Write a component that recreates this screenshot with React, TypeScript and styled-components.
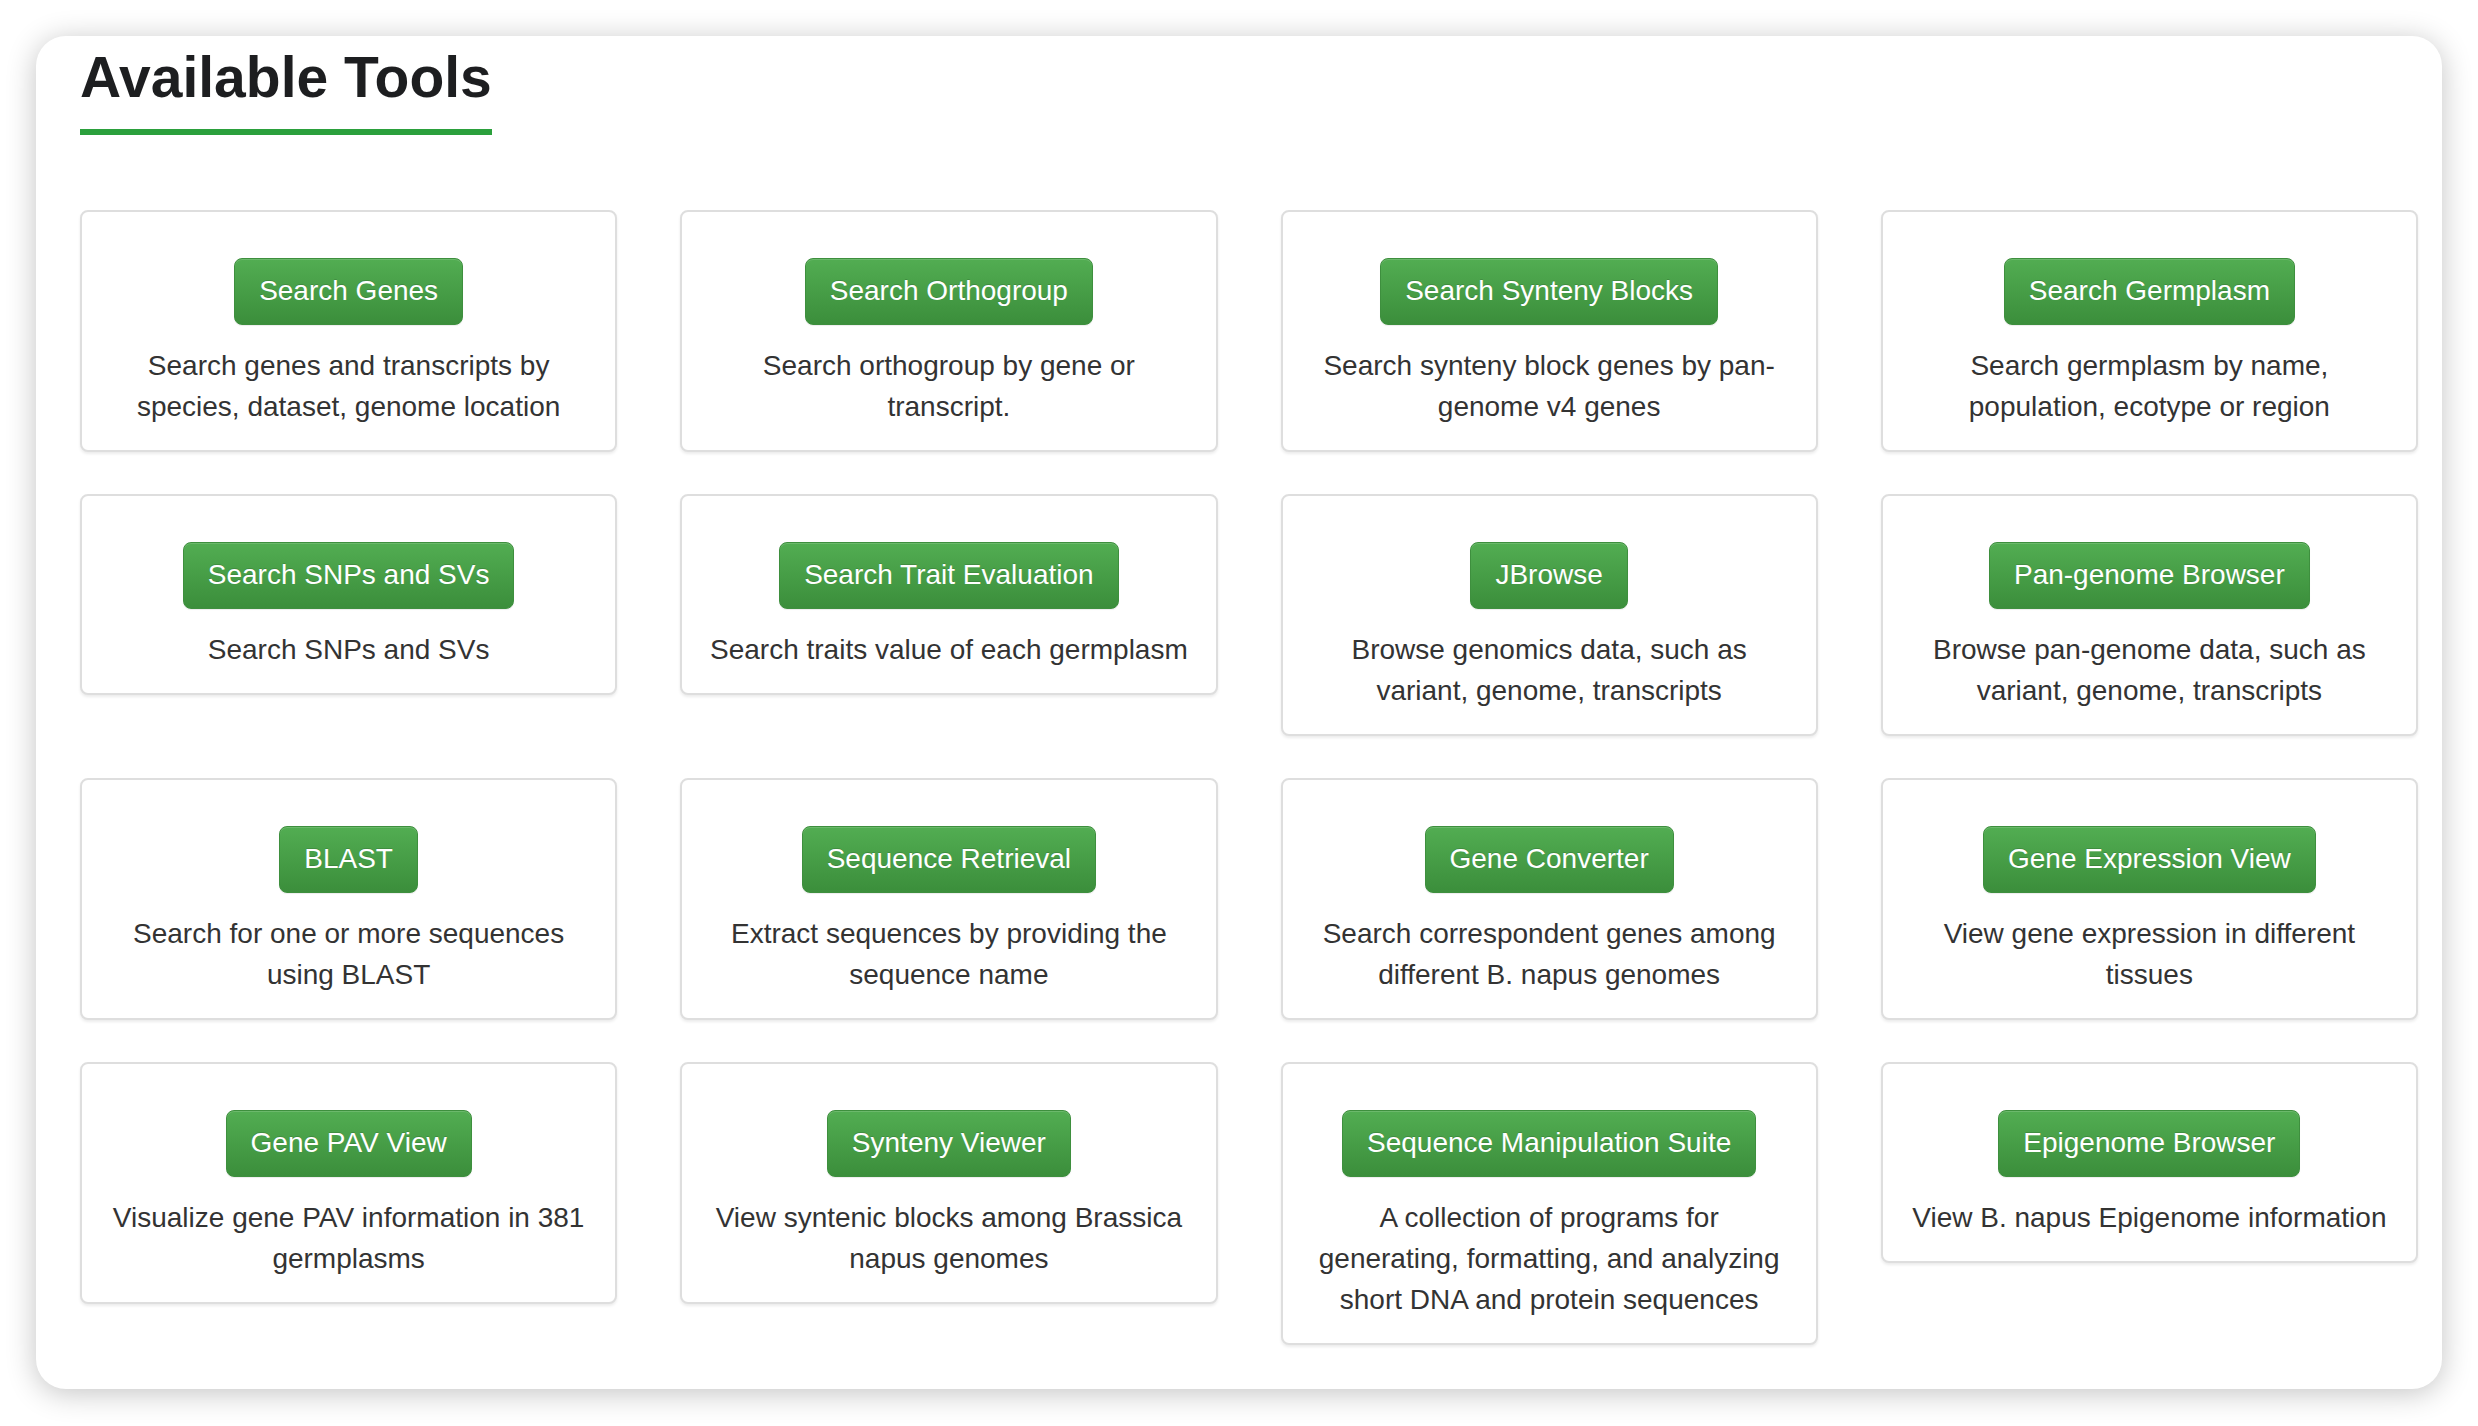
import React from "react";
import styled, { createGlobalStyle } from "styled-components";

const GlobalStyle = createGlobalStyle`
  html, body {
    margin: 0;
    padding: 0;
    background: #ffffff;
  }
  body {
    font-family: "Liberation Sans", Arial, "Helvetica Neue", Helvetica, sans-serif;
    color: #333333;
  }
  * { box-sizing: border-box; }
`;

const Page = styled.div`
  padding: 36px 36px 37px 36px;
`;

const Panel = styled.section`
  background: #ffffff;
  border-radius: 30px;
  box-shadow: 0 4px 30px rgba(0, 0, 0, 0.24);
  padding: 10px 24px 44px 44px;
`;

const Title = styled.h2`
  display: block;
  width: fit-content;
  margin: 0;
  font-size: 57px;
  line-height: 1.1;
  font-weight: 700;
  color: #1d1e20;
  padding-bottom: 20px;
  border-bottom: 6px solid #2ba03c;
`;

const Grid = styled.div`
  display: grid;
  grid-template-columns: repeat(4, 1fr);
  column-gap: 63px;
  row-gap: 42px;
  align-items: start;
  margin-top: 75px;
`;

const Card = styled.div`
  background: #ffffff;
  border: 2px solid #dedede;
  border-radius: 8px;
  box-shadow: 0 2px 3px rgba(0, 0, 0, 0.08);
  padding: 46px 24px 23px;
  display: flex;
  flex-direction: column;
  align-items: center;
  text-align: center;
`;

const ToolButton = styled.a`
  display: inline-block;
  font-size: 28px;
  line-height: 40px;
  padding: 12.5px 24px;
  color: #ffffff;
  text-decoration: none;
  white-space: nowrap;
  border: 1px solid #3e8f3e;
  border-radius: 8px;
  background-image: linear-gradient(to bottom, #52ad52 0%, #3b8e3b 100%);
  text-shadow: 0 -1px 0 rgba(0, 0, 0, 0.15);
  box-shadow: inset 0 1px 0 rgba(255, 255, 255, 0.15), 0 1px 1px rgba(0, 0, 0, 0.075);
  cursor: pointer;
  margin-bottom: 20px;
`;

const Description = styled.p`
  margin: 0;
  font-size: 28px;
  line-height: 41px;
  color: #333333;
`;

const tools: { name: string; desc: string }[] = [
  { name: "Search Genes", desc: "Search genes and transcripts by species, dataset, genome location" },
  { name: "Search Orthogroup", desc: "Search orthogroup by gene or transcript." },
  { name: "Search Synteny Blocks", desc: "Search synteny block genes by pan-genome v4 genes" },
  { name: "Search Germplasm", desc: "Search germplasm by name, population, ecotype or region" },
  { name: "Search SNPs and SVs", desc: "Search SNPs and SVs" },
  { name: "Search Trait Evaluation", desc: "Search traits value of each germplasm" },
  { name: "JBrowse", desc: "Browse genomics data, such as variant, genome, transcripts" },
  { name: "Pan-genome Browser", desc: "Browse pan-genome data, such as variant, genome, transcripts" },
  { name: "BLAST", desc: "Search for one or more sequences using BLAST" },
  { name: "Sequence Retrieval", desc: "Extract sequences by providing the sequence name" },
  { name: "Gene Converter", desc: "Search correspondent genes among different B. napus genomes" },
  { name: "Gene Expression View", desc: "View gene expression in different tissues" },
  { name: "Gene PAV View", desc: "Visualize gene PAV information in 381 germplasms" },
  { name: "Synteny Viewer", desc: "View syntenic blocks among Brassica napus genomes" },
  {
    name: "Sequence Manipulation Suite",
    desc: "A collection of programs for generating, formatting, and analyzing short DNA and protein sequences",
  },
  { name: "Epigenome Browser", desc: "View B. napus Epigenome information" },
];

export default function App() {
  return (
    <>
      <GlobalStyle />
      <Page>
        <Panel>
          <Title>Available Tools</Title>
          <Grid>
            {tools.map((t) => (
              <Card key={t.name}>
                <ToolButton>{t.name}</ToolButton>
                <Description>{t.desc}</Description>
              </Card>
            ))}
          </Grid>
        </Panel>
      </Page>
    </>
  );
}
